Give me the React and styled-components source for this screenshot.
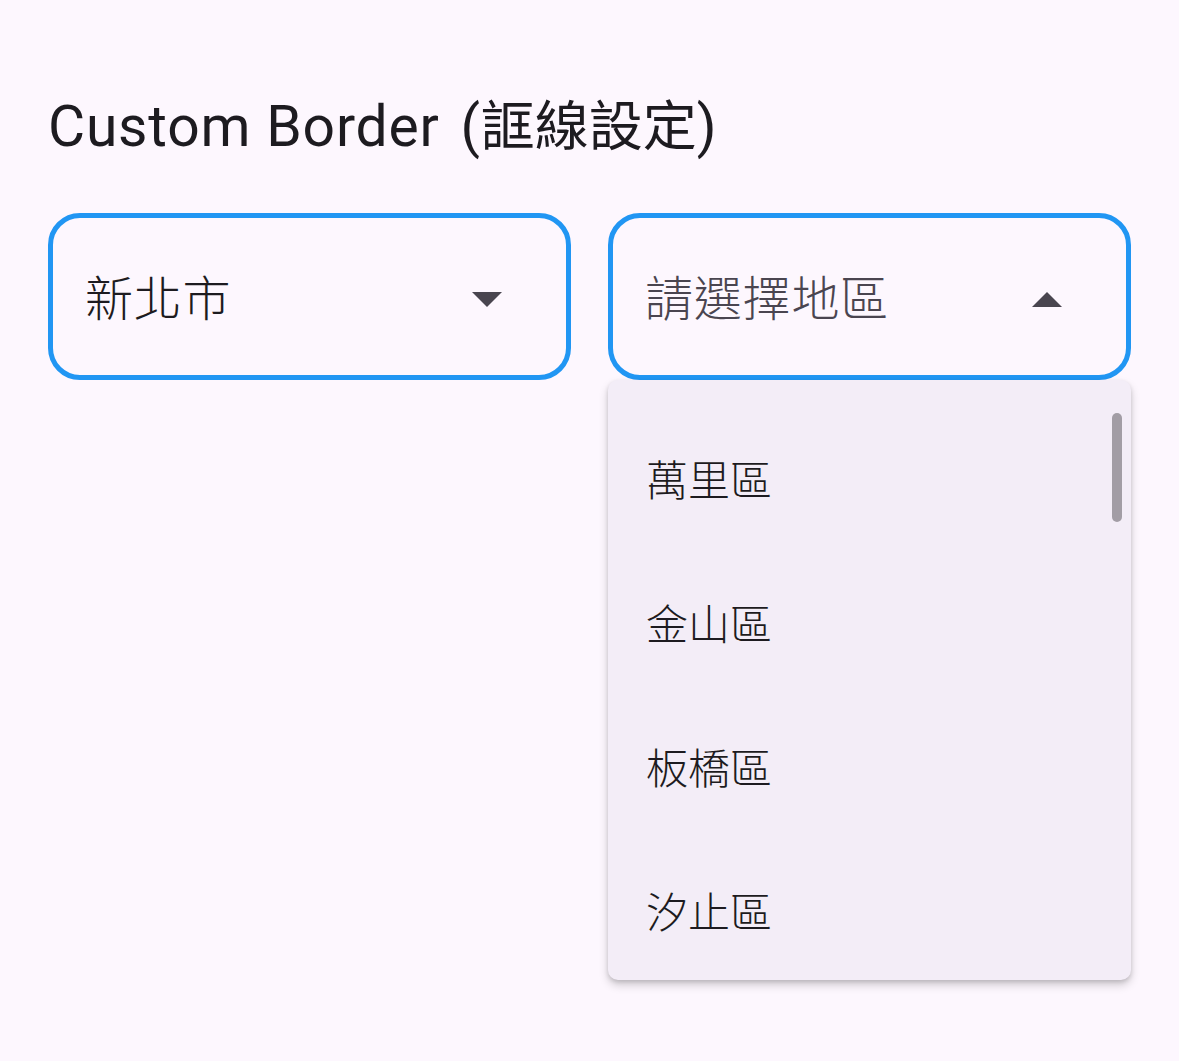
import React from "react";
import styled, { createGlobalStyle } from "styled-components";

const GlobalStyle = createGlobalStyle`
  html, body {
    margin: 0;
    padding: 0;
    background: #fdf7fe;
  }

  body {
    font-family: Roboto, "Noto Sans CJK TC", sans-serif;
    color: #1d1b20;
  }
`;

const Page = styled.main`
  min-height: 1061px;
  padding: 93px 48px 0;
  box-sizing: border-box;
`;

const Title = styled.h2`
  margin: 0 0 53px;
  height: 67px;
  font-size: 57px;
  font-weight: 400;
  line-height: 67px;
  letter-spacing: 0.8px;
  color: #1d1b20;
  white-space: nowrap;
`;

const Note = styled.span`
  margin-left: 6px;
`;

const TitleCjk = styled.span`
  font-size: 54px;
  line-height: 1;
  letter-spacing: 0;
`;

const Row = styled.div`
  display: grid;
  grid-template-columns: 1fr 1fr;
  gap: 37px;
`;

const Field = styled.div`
  position: relative;
`;

const Box = styled.div`
  height: 167px;
  box-sizing: border-box;
  border: 5px solid #2196f3;
  border-radius: 32px;
  display: flex;
  align-items: center;
  justify-content: space-between;
  padding: 6px 64px 0 32px;
`;

const Value = styled.span`
  font-size: 48px;
  font-weight: 300;
  line-height: 1;
  letter-spacing: 0.8px;
  color: ${(p) => (p.placeholder ? "#4a4550" : "#1d1b20")};
`;

const Arrow = ({ up }) => (
  <svg width="30" height="15" viewBox="0 0 30 15">
    <path d={up ? "M0 15 L15 0 L30 15 Z" : "M0 0 L30 0 L15 15 Z"} fill="#49454f" />
  </svg>
);

const Menu = styled.ul`
  position: absolute;
  top: 100%;
  left: 0;
  right: 0;
  height: 600px;
  margin: 0;
  padding: 25px 0 0;
  list-style: none;
  background: #f3edf7;
  border-radius: 10px;
  box-shadow: 0 5px 10px rgba(0, 0, 0, 0.18), 0 2px 4px rgba(0, 0, 0, 0.12);
  overflow: hidden;
  box-sizing: border-box;
`;

const Item = styled.li`
  height: 144px;
  display: flex;
  align-items: center;
  padding: 0 38px;
  font-size: 42px;
  font-weight: 300;
  color: #1d1b20;
`;

const Thumb = styled.div`
  position: absolute;
  top: 33px;
  right: 9px;
  width: 10px;
  height: 109px;
  border-radius: 5px;
  background: #a29da5;
`;

const districts = ["萬里區", "金山區", "板橋區", "汐止區"];

const App = () => (
  <>
    <GlobalStyle />
    <Page>
      <Title>
        Custom Border
        <Note>
          {" "}(<TitleCjk>誆線設定</TitleCjk>)
        </Note>
      </Title>
      <Row>
        <Field>
          <Box>
            <Value>新北市</Value>
            <Arrow />
          </Box>
        </Field>
        <Field>
          <Box>
            <Value placeholder>請選擇地區</Value>
            <Arrow up />
          </Box>
          <Menu>
            {districts.map((d) => (
              <Item key={d}>{d}</Item>
            ))}
            <Thumb />
          </Menu>
        </Field>
      </Row>
    </Page>
  </>
);

export default App;
